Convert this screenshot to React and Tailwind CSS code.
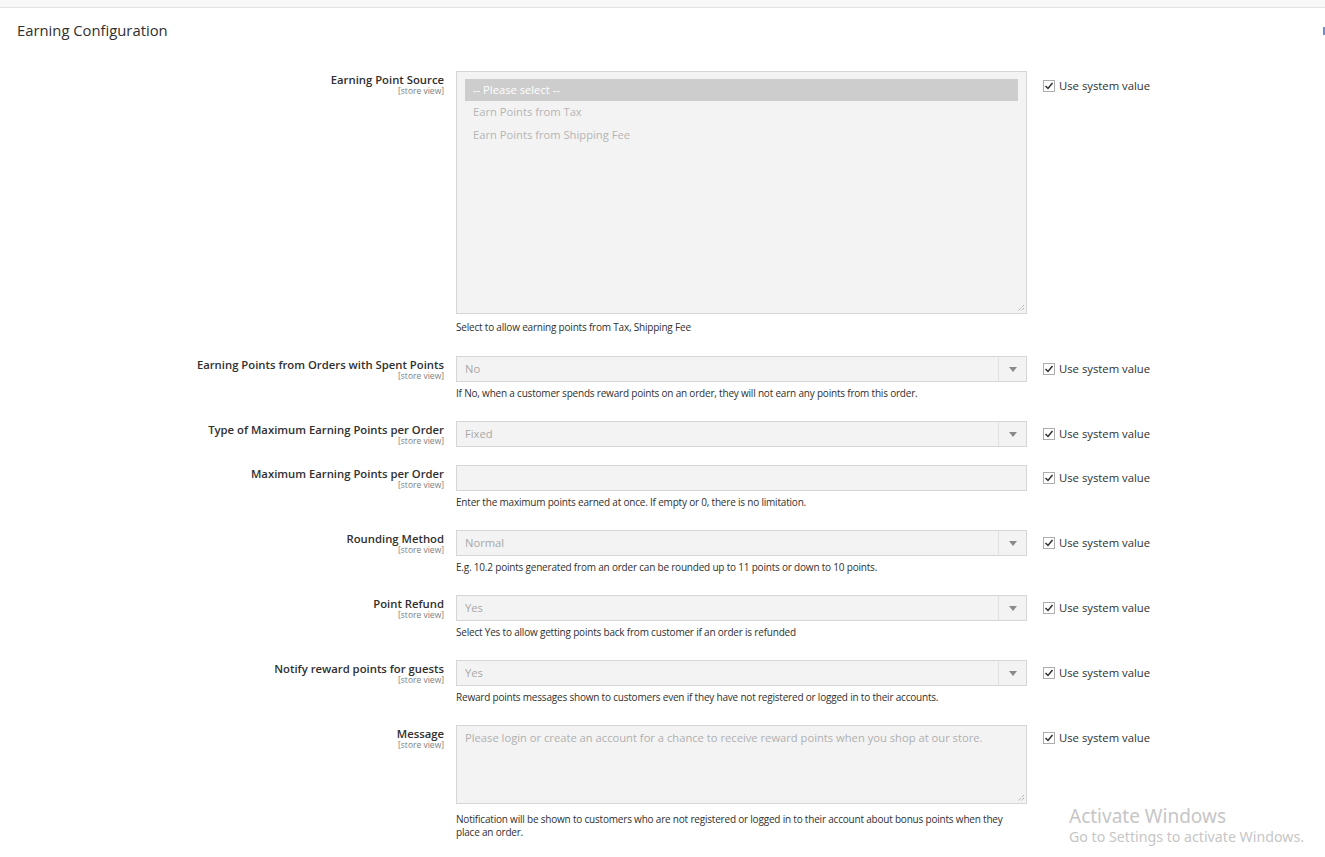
import React from "react";

const font = { fontFamily: '"Open Sans", "Noto Sans", sans-serif' };

function StoreView() {
  return <div className="text-[8.5px] leading-[10px] text-[#808080] font-normal">[store view]</div>;
}

function Label({ text }) {
  return (
    <div className="w-[444px] shrink-0 text-right pt-[2px]">
      <div className="text-[11.3px] leading-[13px] font-semibold text-[#303030]">{text}</div>
      <StoreView />
    </div>
  );
}

function UseSystem({ top = "" }) {
  return (
    <div className={"self-start h-[26px] flex items-center gap-[4px] pl-[16px] " + top}>
      <span className="w-[12px] h-[12px] border border-[#adadad] bg-white flex items-center justify-center">
        <svg width="10" height="10" viewBox="0 0 10 10">
          <path d="M1.5 5 L4 7.5 L8.5 2" fill="none" stroke="#303030" strokeWidth="1.5" />
        </svg>
      </span>
      <span className="text-[11.3px] text-[#303030]">Use system value</span>
    </div>
  );
}

function Note({ children }) {
  return <div className="text-[10px] leading-[13px] text-[#303030] mt-[5px] tracking-[-0.02em]">{children}</div>;
}

function Select({ value }) {
  return (
    <div className="w-[571px] h-[26px] border border-[#d6d6d6] bg-[#f3f3f3] flex items-center">
      <span className="flex-1 px-[8px] text-[11.2px] text-[#a8a8a8]">{value}</span>
      <span className="w-[28px] h-full border-l border-[#e0e0e0] flex items-center justify-center">
        <span className="w-0 h-0 border-l-[4px] border-r-[4px] border-t-[5px] border-l-transparent border-r-transparent border-t-[#8a8a8a]" />
      </span>
    </div>
  );
}

function Row({ label, children, note, mb, top }) {
  return (
    <div className={"flex " + mb}>
      <Label text={label} />
      <div className="ml-[12px] w-[571px]">
        {children}
        {note && <Note>{note}</Note>}
      </div>
      <UseSystem top={top} />
    </div>
  );
}

export default function App() {
  return (
    <div className="relative w-[1325px] h-[857px] bg-white overflow-hidden" style={font}>
      <div className="h-[8px] bg-[#f8f8f8] border-b border-[#e3e3e3]" />
      <div className="flex items-center justify-between pl-[17px] h-[44px]">
        <h2 className="text-[14.8px] text-[#303030] font-normal">Earning Configuration</h2>
        <span className="w-[2px] h-[8px] bg-[#6b8fd6] mt-[2px]" />
      </div>

      <div className="pt-[19px]">
        <Row
          label="Earning Point Source"
          mb="mb-[22px]"
          top="mt-[2px]"
          note={<span className="block mt-[7px]">Select to allow earning points from Tax, Shipping Fee</span>}
        >
          <div className="relative w-[571px] h-[243px] border border-[#d6d6d6] bg-[#f3f3f3] pt-[7px] px-[8px]">
            <div className="h-[22px] bg-[#cdcdcd] text-white text-[11.2px] px-[8px] flex items-center">-- Please select --</div>
            <div className="h-[23px] px-[8px] flex items-center text-[11.2px] text-[#b5b5b5]">Earn Points from Tax</div>
            <div className="h-[23px] px-[8px] flex items-center text-[11.2px] text-[#b5b5b5]">Earn Points from Shipping Fee</div>
            <svg className="absolute right-[1px] bottom-[1px]" width="9" height="9" viewBox="0 0 9 9">
              <path d="M8 2 L2 8 M8 5 L5 8" stroke="#9a9a9a" strokeWidth="1" strokeDasharray="1 1" />
            </svg>
          </div>
        </Row>

        <Row
          label="Earning Points from Orders with Spent Points"
          mb="mb-[21px]"
          note="If No, when a customer spends reward points on an order, they will not earn any points from this order."
        >
          <Select value="No" />
        </Row>

        <Row label="Type of Maximum Earning Points per Order" mb="mb-[18px]">
          <Select value="Fixed" />
        </Row>

        <Row
          label="Maximum Earning Points per Order"
          mb="mb-[21px]"
          note="Enter the maximum points earned at once. If empty or 0, there is no limitation."
        >
          <div className="w-[571px] h-[26px] border border-[#d6d6d6] bg-[#f3f3f3]" />
        </Row>

        <Row
          label="Rounding Method"
          mb="mb-[21px]"
          note="E.g. 10.2 points generated from an order can be rounded up to 11 points or down to 10 points."
        >
          <Select value="Normal" />
        </Row>

        <Row
          label="Point Refund"
          mb="mb-[21px]"
          note="Select Yes to allow getting points back from customer if an order is refunded"
        >
          <Select value="Yes" />
        </Row>

        <Row
          label="Notify reward points for guests"
          mb="mb-[21px]"
          note="Reward points messages shown to customers even if they have not registered or logged in to their accounts."
        >
          <Select value="Yes" />
        </Row>

        <Row
          label="Message"
          mb="mb-0"
          note={
            <span className="block mt-[9px] w-[555px]">
              Notification will be shown to customers who are not registered or logged in to their account about bonus points when they place an order.
            </span>
          }
        >
          <div className="relative w-[571px] h-[79px] border border-[#d6d6d6] bg-[#f3f3f3] px-[8px] pt-[4px] text-[11.2px] text-[#b0b0b0]">
            Please login or create an account for a chance to receive reward points when you shop at our store.
            <svg className="absolute right-[1px] bottom-[1px]" width="9" height="9" viewBox="0 0 9 9">
              <path d="M8 2 L2 8 M8 5 L5 8" stroke="#9a9a9a" strokeWidth="1" strokeDasharray="1 1" />
            </svg>
          </div>
        </Row>
      </div>

      <div className="absolute left-[1069px] top-[804px] text-[#c6c6c6] pointer-events-none" style={{ fontFamily: '"Noto Sans", "Open Sans", sans-serif' }}>
        <div className="text-[19px] leading-[24px]">Activate Windows</div>
        <div className="text-[14.2px] leading-[18px]">Go to Settings to activate Windows.</div>
      </div>
    </div>
  );
}
